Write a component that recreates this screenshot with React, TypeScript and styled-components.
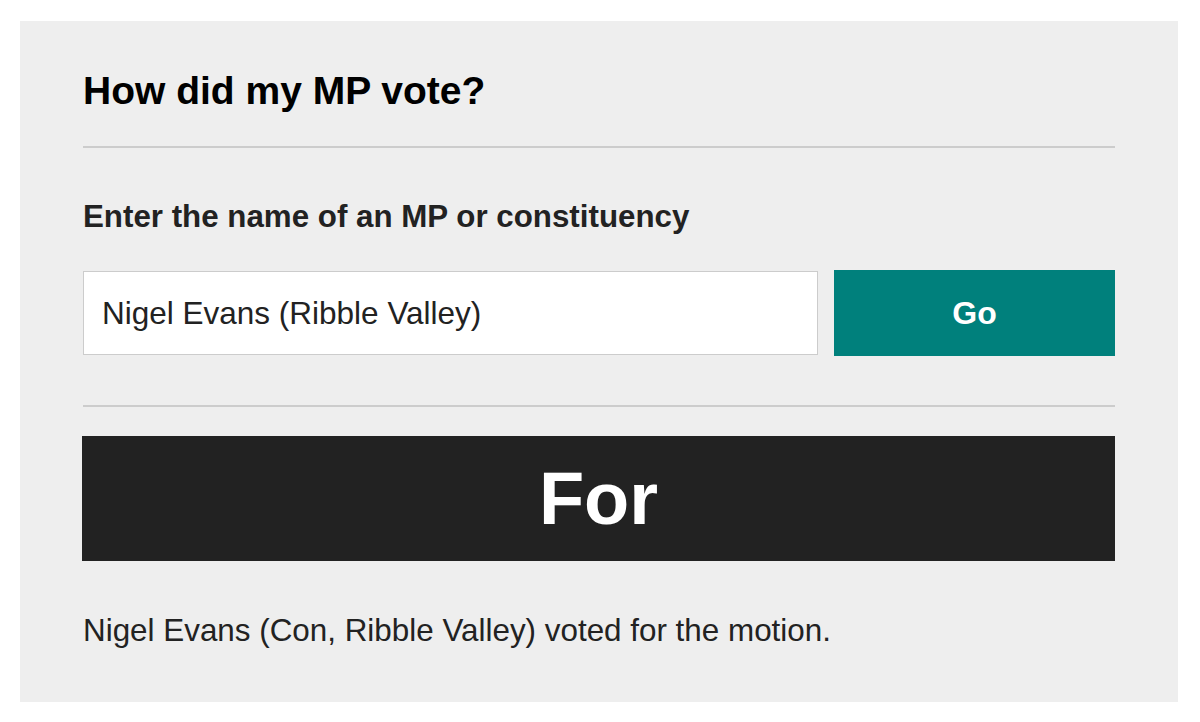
import React from "react";
import styled, { createGlobalStyle } from "styled-components";

const Global = createGlobalStyle`
  html, body { margin: 0; padding: 0; background: #ffffff; }
  body { font-family: "Liberation Sans", Arial, Helvetica, sans-serif; color: #222; }
`;

const Panel = styled.section`
  box-sizing: border-box;
  margin: 21px 0 0 20px;
  width: 1158px;
  height: 681px;
  background: #eeeeee;
  padding: 48px 63px 0 63px;
  display: flex;
  flex-direction: column;
`;

const Heading = styled.h2`
  margin: 0;
  font-size: 39px;
  line-height: 44px;
  font-weight: 700;
  color: #000;
`;

const Divider = styled.hr<{ $top: number }>`
  margin: ${(p) => p.$top}px 0 0 0;
  border: 0;
  height: 2px;
  background: #cccccc;
`;

const Label = styled.label`
  display: block;
  margin-top: 51px;
  font-size: 31.3px;
  line-height: 36px;
  font-weight: 700;
  color: #222;
`;

const SearchRow = styled.div`
  margin-top: 35px;
  display: flex;
  align-items: center;
  gap: 16px;
`;

const Input = styled.input`
  box-sizing: border-box;
  width: 735px;
  height: 84px;
  border: 1px solid #cccccc;
  background: #fff;
  padding: 0 18px;
  font-family: "Liberation Sans", Arial, Helvetica, sans-serif;
  font-size: 31.5px;
  color: #222;
  outline: none;
`;

const GoButton = styled.button`
  flex: 1;
  height: 86px;
  border: 0;
  background: #00807c;
  color: #fff;
  font-family: "Liberation Sans", Arial, Helvetica, sans-serif;
  font-weight: 700;
  font-size: 32px;
  cursor: pointer;
`;

const Verdict = styled.div`
  margin-top: 29px;
  height: 125px;
  background: #222222;
  color: #fff;
  display: flex;
  align-items: center;
  justify-content: center;
  font-weight: 700;
  font-size: 74px;
  margin-left: -1px;
`;

const Result = styled.p`
  margin: 52px 0 0 0;
  font-size: 31.4px;
  line-height: 36px;
  color: #222;
`;

export default function App() {
  return (
    <>
      <Global />
      <Panel>
        <Heading>How did my MP vote?</Heading>
        <Divider $top={33} />
        <Label htmlFor="mp">Enter the name of an MP or constituency</Label>
        <SearchRow>
          <Input id="mp" defaultValue="Nigel Evans (Ribble Valley)" />
          <GoButton>Go</GoButton>
        </SearchRow>
        <Divider $top={49} />
        <Verdict>For</Verdict>
        <Result>Nigel Evans (Con, Ribble Valley) voted for the motion.</Result>
      </Panel>
    </>
  );
}
